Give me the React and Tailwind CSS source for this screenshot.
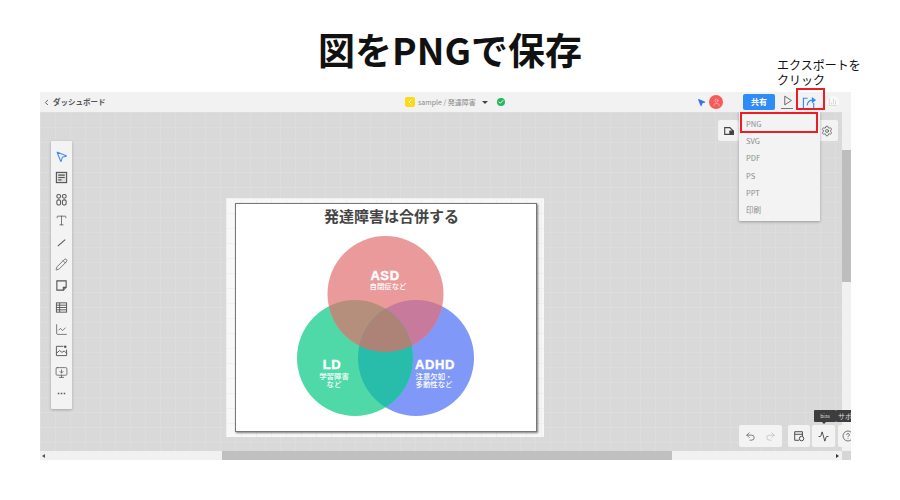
import {
  ChevronLeft, MousePointer2, Type, Pencil, LineChart, MonitorDown,
  Settings, Undo2, Redo2, Activity, CircleHelp, User, Check, BarChart3,
} from "lucide-react";

const toolClass = "w-[13px] h-[13px] text-[#555]";

function Glyph({ size = 13, stroke = "#555", width = 1.1, children }) {
  return (
    <svg viewBox="0 0 14 14" width={size} height={size} fill="none" stroke={stroke} strokeWidth={width}>
      {children}
    </svg>
  );
}

function ShareIcon() {
  return (
    <svg viewBox="0 0 16 16" className="w-[15px] h-[15px]" fill="none" stroke="#2f8bf5" strokeWidth="1.2">
      <path d="M6 3.5H1.5v11h11V8.5" />
      <path d="M5.5 11c.5-3.8 3-5.5 6-5.5" />
      <path d="M10.5 2 15 5.4l-4.5 3.6z" fill="#2f8bf5" stroke="none" />
    </svg>
  );
}

function Venn() {
  return (
    <svg viewBox="1 1 300 227" className="w-full h-full font-['Noto_Sans_CJK_JP',sans-serif]">
      <defs>
        <clipPath id="red"><circle cx="150.5" cy="91" r="58" /></clipPath>
        <clipPath id="green"><circle cx="120" cy="155" r="58" /></clipPath>
      </defs>
      <circle cx="181" cy="155" r="58" fill="#8098f8" />
      <circle cx="120" cy="155" r="58" fill="#4fd9a9" />
      <circle cx="150.5" cy="91" r="58" fill="#ea9a9a" />
      <g clipPath="url(#red)">
        <circle cx="120" cy="155" r="58" fill="#b68f7c" />
        <circle cx="181" cy="155" r="58" fill="#c77a9c" />
      </g>
      <g clipPath="url(#green)">
        <circle cx="181" cy="155" r="58" fill="#27bdaa" />
      </g>
      <g clipPath="url(#red)">
        <g clipPath="url(#green)">
          <circle cx="181" cy="155" r="58" fill="#ac8376" />
        </g>
      </g>
      <text x="156.5" y="19" textAnchor="middle" fontSize="15" fontWeight="700" fill="#444">発達障害は合併する</text>
      <g fill="#fff" textAnchor="middle">
        <g fontSize="13" fontWeight="700" stroke="#fff" strokeWidth="0.4" letterSpacing="0.6" className="font-['Liberation_Sans',sans-serif]">
          <text x="150" y="77">ASD</text>
          <text x="97" y="166">LD</text>
          <text x="200" y="166">ADHD</text>
        </g>
        <g fontSize="7.4" fontWeight="500">
          <text x="153" y="86">自閉症など</text>
          <text x="99" y="176">学習障害</text>
          <text x="99" y="183.5">など</text>
          <text x="199" y="176">注意欠如・</text>
          <text x="199" y="183.5">多動性など</text>
        </g>
      </g>
    </svg>
  );
}

export default function App() {
  const tools = [
    <MousePointer2 key="pointer" className="w-[13px] h-[13px] text-[#3d8ef7]" />,
    <Glyph key="note" width={1.2}>
      <rect x="1.5" y="1.5" width="11" height="11" fill="#ddd" />
      <path d="M3.5 4.5h7M3.5 7h7M3.5 9.5h3.5" />
    </Glyph>,
    <Glyph key="shapes">
      <circle cx="4" cy="3.6" r="2.1" />
      <circle cx="10" cy="3.6" r="2.1" />
      <rect x="2" y="7.4" width="4" height="5.4" rx="1.6" />
      <rect x="8" y="7.4" width="4" height="5.4" rx="1.6" />
    </Glyph>,
    <Type key="text" className={toolClass} strokeWidth={1.4} />,
    <Glyph key="line"><path d="M3 11 11 4" /></Glyph>,
    <Pencil key="pencil" className={toolClass} strokeWidth={1.4} />,
    <Glyph key="sticky" width={1.2}>
      <path d="M2 2h10v7l-3 3H2z" />
      <path d="M12 9H9v3" />
    </Glyph>,
    <Glyph key="table" width={1}>
      <rect x="1.5" y="2" width="11" height="10" />
      <path d="M1.5 4.5h11M1.5 7h11M1.5 9.5h11M5 2v10" />
    </Glyph>,
    <LineChart key="chart" className={toolClass} strokeWidth={1.4} />,
    <Glyph key="image" width={1}>
      <path d="M9 2.5H1.5v10h11V6" />
      <path d="M1.5 10 5 7l2.5 2L10 7.5l2.5 2.5" />
      <circle cx="11" cy="3" r="1.4" fill="#555" stroke="none" />
    </Glyph>,
    <MonitorDown key="monitor" className={toolClass} strokeWidth={1.4} />,
    <Glyph key="more" size={13} width={1.4} stroke="#555">
      <path d="M3 7h1.6M6.2 7h1.6M9.4 7H11" />
    </Glyph>,
  ];
  const formats = ["PNG", "SVG", "PDF", "PS", "PPT", "印刷"];

  return (
    <div className="relative w-[900px] h-[500px] bg-white overflow-hidden font-['Noto_Sans_CJK_JP','Noto_Sans',sans-serif]">
      <h1 className="h-[92px] pt-[7px] flex items-center justify-center text-[37px] font-bold text-[#111]">図をPNGで保存</h1>

      {/* app window */}
      <div className="relative ml-[40px] w-[811px] h-[368px] flex flex-col overflow-hidden">
        <div className="h-[20px] shrink-0 bg-[#f2f2f2] flex items-center text-[#555] whitespace-nowrap">
          <div className="w-[365px] shrink-0 flex items-center pl-[2px] gap-[2px]">
            <ChevronLeft className="w-[9px] h-[9px]" strokeWidth={2.5} />
            <span className="text-[7.5px] font-bold">ダッシュボード</span>
          </div>
          <div className="w-[292px] shrink-0 flex items-center">
            <span className="w-[10px] h-[10px] rounded-[2px] bg-[#fbdc14] flex items-center justify-center">
              <ChevronLeft className="w-[8px] h-[8px] text-white" strokeWidth={3} />
            </span>
            <span className="ml-[3px] text-[7px] text-[#888]">sample / 発達障害</span>
            <span className="ml-[6px] w-0 h-0 border-x-[3px] border-x-transparent border-t-[3px] border-t-[#444]" />
            <span className="ml-[9px] w-[8px] h-[8px] rounded-full bg-[#22b95c] flex items-center justify-center">
              <Check className="w-[6px] h-[6px] text-white" strokeWidth={4} />
            </span>
          </div>
          <div className="flex items-center">
            <MousePointer2 className="w-[9px] h-[9px] text-[#2f6ff0] fill-[#2f6ff0]" />
            <span className="ml-[3px] w-[14px] h-[14px] rounded-full bg-[#f85a5a] flex items-center justify-center">
              <User className="w-[9px] h-[9px] text-[#ffd0d0]" strokeWidth={1.5} />
            </span>
            <span className="ml-[20px] w-[32px] h-[16px] rounded-[2px] bg-[#2f8bf5] text-white text-[8px] font-bold flex items-center justify-center">共有</span>
            <span className="ml-[6px] w-[12px] h-[14px] border-b border-[#777] flex justify-center items-start">
              <Glyph size={11} stroke="#555" width={1.1}>
                <path d="M3.5 1.5 12 7l-8.5 5.5z" />
              </Glyph>
            </span>
            <span className="ml-[9px] w-[15px] flex justify-center"><ShareIcon /></span>
            <span className="ml-[10px] w-[12px] h-[12px] rounded-full bg-[#fafafa] flex items-center justify-center">
              <BarChart3 className="w-[10px] h-[10px] text-[#bbb]" strokeWidth={1.4} />
            </span>
          </div>
        </div>

        <div className="flex-1 flex min-h-0">
          {/* canvas */}
          <div className="relative flex-1 overflow-hidden bg-[#d9d9d9] bg-[linear-gradient(#dddddd_1px,transparent_1px),linear-gradient(90deg,#dddddd_1px,transparent_1px)] bg-[size:15px_15px]">
            <div className="absolute left-[11px] top-[29px] w-[21px] h-[268px] bg-[#f3f3f3] rounded-[1px] shadow-[0_1px_3px_rgba(0,0,0,0.25)] flex flex-col items-center justify-between py-[8.5px]">
              {tools}
            </div>

            <div className="absolute left-[186px] top-[86px] w-[318px] h-[239px] bg-[#f8f8f8] bg-[linear-gradient(#f0f0f0_1px,transparent_1px),linear-gradient(90deg,#f0f0f0_1px,transparent_1px)] bg-[size:15px_15px] pl-[9px] pt-[5px]">
              <div className="w-[302px] h-[229px] bg-white border border-[#777] shadow-[1px_1px_2px_rgba(0,0,0,0.5)]">
                <Venn />
              </div>
            </div>

            <div className="absolute left-[678px] top-[8px] w-[21px] h-[21px] bg-[#f3f3f3] rounded-[2px] flex items-center justify-center">
              <Glyph size={12} stroke="#444" width={1.3}>
                <path d="M2 3h6l4 4v4H2z" />
                <path d="M8 7h4v4H8z" fill="#444" />
              </Glyph>
            </div>
            <div className="absolute left-[770px] top-[8px] w-[28px] h-[21px] bg-[#f3f3f3] rounded-[2px] flex items-center justify-end pr-[5px]">
              <Settings className="w-[12px] h-[12px] text-[#444]" strokeWidth={1.4} />
            </div>

            {/* export menu */}
            <div className="absolute left-[699px] top-[-1px] w-[81px] h-[110px] bg-[#f3f3f3] rounded-[1px] shadow-[0_1px_3px_rgba(0,0,0,0.3)] flex flex-col pt-[4px]">
              {formats.map((f) => (
                <div key={f} className="h-[17.2px] pl-[7px] flex items-center text-[7.5px] text-[#8c8c8c]">{f}</div>
              ))}
            </div>
          </div>

          {/* vertical scrollbar */}
          <div className="w-[9px] shrink-0 bg-[#f1f1f1] pt-[38px]">
            <div className="h-[132px] bg-[#bdbdbd]" />
          </div>
        </div>

        {/* horizontal scrollbar */}
        <div className="h-[9px] shrink-0 flex bg-[#f1f1f1]">
          <div className="flex-1 pl-[182px]">
            <div className="w-[450px] h-full bg-[#c0c0c0]" />
          </div>
          <div className="w-[9px] bg-[#d6d6d6]" />
        </div>
        <span className="absolute left-[2px] bottom-[2px] w-0 h-0 border-y-[2.5px] border-y-transparent border-r-[3px] border-r-[#555]" />
        <span className="absolute right-[12px] bottom-[2px] w-0 h-0 border-y-[2.5px] border-y-transparent border-l-[3px] border-l-[#333]" />

        {/* bottom tools, they sit over the vertical scrollbar */}
        <div className="absolute left-[699px] top-[333px] flex">
          <div className="w-[43px] h-[22px] bg-[#f3f3f3] rounded-[2px] flex items-center justify-around px-[2px]">
            <Undo2 className="w-[11px] h-[11px] text-[#555]" strokeWidth={1.6} />
            <Redo2 className="w-[11px] h-[11px] text-[#bbb]" strokeWidth={1.6} />
          </div>
          <div className="ml-[6px] w-[22px] h-[22px] bg-[#f3f3f3] rounded-[2px] flex items-center justify-center">
            <Glyph size={12} stroke="#444" width={1.1}>
              <path d="M7 12H2V2h9v5" />
              <path d="M2 5h9" />
              <circle cx="10" cy="10" r="2.6" />
            </Glyph>
          </div>
          <div className="ml-[2px] w-[23px] h-[22px] bg-[#f3f3f3] rounded-[2px] flex items-center justify-center">
            <Activity className="w-[11px] h-[11px] text-[#333]" strokeWidth={1.8} />
          </div>
          <div className="ml-[3px] w-[20px] h-[22px] bg-[#f3f3f3] rounded-[2px] flex items-center justify-center">
            <CircleHelp className="w-[12px] h-[12px] text-[#444]" strokeWidth={1.4} />
          </div>
        </div>
        <div className="absolute left-[774px] top-[318px] flex">
          <div className="relative w-[22px] h-[12px] bg-[#3d3d3d] rounded-[1px] text-[5px] text-[#ddd] flex items-center justify-center">
            bias
            <span className="absolute left-[8px] top-[12px] w-0 h-0 border-x-[2px] border-x-transparent border-t-[2px] border-t-[#3d3d3d]" />
          </div>
          <div className="w-[22px] h-[12px] bg-[#3d3d3d] rounded-[1px] text-[7px] text-[#ddd] pl-[2px] flex items-center whitespace-nowrap overflow-hidden">サポート</div>
        </div>
      </div>

      {/* annotations */}
      <p className="absolute left-[777px] top-[57px] w-[90px] text-[12px] leading-[15px] text-[#111]">エクスポートをクリック</p>
      <div className="absolute left-[796px] top-[88px] w-[29px] h-[22px] border-2 border-[#ee1c25]" />
      <div className="absolute left-[740px] top-[112px] w-[78px] h-[21px] border-2 border-[#ee1c25]" />
    </div>
  );
}
